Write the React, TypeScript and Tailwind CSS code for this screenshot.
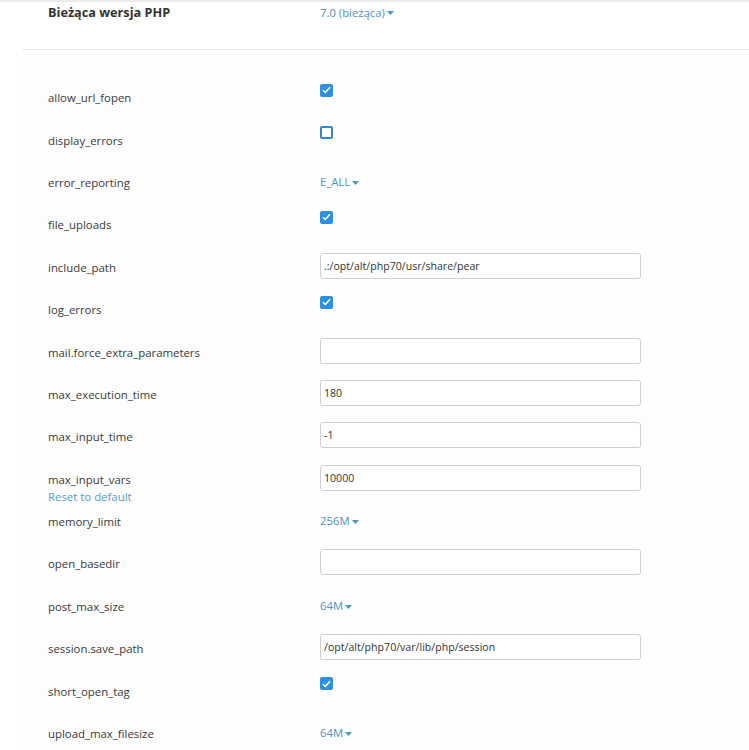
import React from 'react';

type Setting =
  | { name: string; kind: 'check'; checked: boolean }
  | { name: string; kind: 'select'; value: string }
  | { name: string; kind: 'text'; value: string; reset?: boolean };

const settings: Setting[] = [
  { name: 'allow_url_fopen', kind: 'check', checked: true },
  { name: 'display_errors', kind: 'check', checked: false },
  { name: 'error_reporting', kind: 'select', value: 'E_ALL' },
  { name: 'file_uploads', kind: 'check', checked: true },
  { name: 'include_path', kind: 'text', value: '.:/opt/alt/php70/usr/share/pear' },
  { name: 'log_errors', kind: 'check', checked: true },
  { name: 'mail.force_extra_parameters', kind: 'text', value: '' },
  { name: 'max_execution_time', kind: 'text', value: '180' },
  { name: 'max_input_time', kind: 'text', value: '-1' },
  { name: 'max_input_vars', kind: 'text', value: '10000', reset: true },
  { name: 'memory_limit', kind: 'select', value: '256M' },
  { name: 'open_basedir', kind: 'text', value: '' },
  { name: 'post_max_size', kind: 'select', value: '64M' },
  { name: 'session.save_path', kind: 'text', value: '/opt/alt/php70/var/lib/php/session' },
  { name: 'short_open_tag', kind: 'check', checked: true },
  { name: 'upload_max_filesize', kind: 'select', value: '64M' },
];

const Caret = () => (
  <svg width="7" height="4" viewBox="0 0 7 4" className="ml-[2px] mt-[1px]">
    <path d="M0 0h7L3.5 4z" fill="currentColor" />
  </svg>
);

const Dropdown: React.FC<{ value: string }> = ({ value }) => (
  <span className="flex items-center text-[11.3px] text-[#4f92c6] cursor-pointer">
    {value}
    <Caret />
  </span>
);

const Checkbox: React.FC<{ checked: boolean }> = ({ checked }) =>
  checked ? (
    <span className="-mt-[12px] flex h-[13px] w-[13px] items-center justify-center rounded-[2px] bg-[#2f8fe0]">
      <svg width="9" height="8" viewBox="0 0 9 8">
        <path d="M1 4.2l2.3 2.3L8 1.3" fill="none" stroke="#fff" strokeWidth="1.5" />
      </svg>
    </span>
  ) : (
    <span className="-mt-[12px] block h-[13px] w-[13px] rounded-[2px] border-2 border-[#3a84c8] bg-white" />
  );

const App: React.FC = () => {
  return (
    <div className="min-h-[750px] w-[749px] border-t-2 border-[#ececec] bg-white text-[#3a3a3a] font-['Open_Sans','Liberation_Sans',sans-serif]">
      <div className="flex h-[47px] pl-[48px] pt-[2px]">
        <div className="w-[272px] text-[12.7px] font-bold leading-[17px] text-[#333]">Bieżąca wersja PHP</div>
        <div className="leading-[17px]">
          <Dropdown value="7.0 (bieżąca)" />
        </div>
      </div>

      <div className="ml-[22px] border-t border-[#e8e8e8] bg-[#fdfdfd] pt-[25px] pl-[26px]">
        {settings.map((s) => (
          <div key={s.name} className="flex h-[42.4px] items-center">
            <div className="w-[272px] text-[11.4px] leading-[17px]">
              <div className="mt-[3px]">{s.name}</div>
              {s.kind === 'text' && s.reset && (
                <div className="h-0">
                  <span className="text-[11.4px] text-[#5b9ad0]">Reset to default</span>
                </div>
              )}
            </div>
            <div className="flex items-center">
              {s.kind === 'check' && <Checkbox checked={s.checked} />}
              {s.kind === 'select' && (
                <div className="mt-[3px]">
                  <Dropdown value={s.value} />
                </div>
              )}
              {s.kind === 'text' && (
                <input
                  readOnly
                  value={s.value}
                  className="h-[26px] w-[321px] rounded-[3px] border border-[#cfcfcf] bg-white px-[3px] text-[10.6px] text-[#333] outline-none font-['Open_Sans','Liberation_Sans',sans-serif]"
                />
              )}
            </div>
          </div>
        ))}
      </div>
    </div>
  );
};

export default App;
